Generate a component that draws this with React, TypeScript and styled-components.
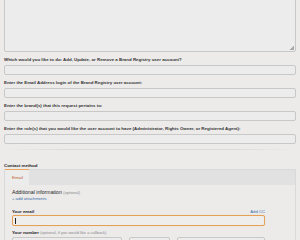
import React from "react";
import styled, { createGlobalStyle } from "styled-components";

const Global = createGlobalStyle`
     html, body {
          margin: 0;
          padding: 0;
          background: #ecebea;
          overflow: hidden;
     }
     body {
          font-family: "Liberation Sans", Arial, sans-serif;
          color: #2b2b2b;
     }
`;

const fields = [
     "Which would you like to do: Add, Update, or Remove a Brand Registry user account?",
     "Enter the Email Address login of the Brand Registry user account:",
     "Enter the brand(s) that this request pertains to:",
     "Enter the role(s) that you would like the user account to have (Administrator, Rights Owner, or Registered Agent):",
];

export default function App() {
     return (
          <>
               <Global />
               <S.Page>
                    <S.TextArea />
                    {fields.map((f) => (
                         <S.Field key={f}>
                              <S.Label>{f}</S.Label>
                              <S.Input />
                         </S.Field>
                    ))}
                    <S.Divider />
                    <S.SectionTitle>Contact method</S.SectionTitle>
                    <S.TabBar>
                         <S.Tab>Email</S.Tab>
                    </S.TabBar>
                    <S.Panel>
                         <S.InfoTitle>
                              Additional information <S.Muted>(optional)</S.Muted>
                         </S.InfoTitle>
                         <S.Link>+ add attachments</S.Link>
                         <S.LabelRow>
                              <S.SmallLabel>Your email</S.SmallLabel>
                              <S.Link>Add CC</S.Link>
                         </S.LabelRow>
                         <S.EmailInput>
                              <S.Caret />
                         </S.EmailInput>
                         <S.SmallLabel $gap={4}>
                              Your number <S.Muted>(optional, if you would like a callback)</S.Muted>
                         </S.SmallLabel>
                         <S.PhoneRow>
                              <S.PhoneBox $w={111} />
                              <S.PhoneBox $w={41} />
                              <S.PhoneBox $w={89} />
                         </S.PhoneRow>
                    </S.Panel>
               </S.Page>
          </>
     );
}

const S = {
     Page: styled.div`
          padding: 0 4px;
          display: flex;
          flex-direction: column;
     `,
     TextArea: styled.div`
          height: 60px;
          margin-top: -8px;
          box-sizing: border-box;
          border: 1px solid #c9c8c8;
          border-radius: 2px;
          background: #edecec;
          position: relative;
          &::after {
               content: "";
               position: absolute;
               right: 1px;
               bottom: 1px;
               width: 4px;
               height: 4px;
               background: linear-gradient(135deg, transparent 50%, #a9a9a9 50%);
          }
     `,
     Field: styled.div`
          display: flex;
          flex-direction: column;
          gap: 2px;
          margin-top: 5px;
     `,
     Label: styled.div`
          font-size: 4.4px;
          line-height: 6px;
          font-weight: 700;
          color: #333;
          white-space: nowrap;
     `,
     Input: styled.div`
          height: 10px;
          box-sizing: border-box;
          border: 1px solid #c9c8c8;
          border-radius: 2px;
          background: #edecec;
     `,
     Divider: styled.div`
          margin-top: 5px;
          height: 1px;
          background: linear-gradient(90deg, transparent, #dddcdc 20%, #dddcdc 80%, transparent);
     `,
     SectionTitle: styled.div`
          margin-top: 13px;
          font-size: 4.4px;
          line-height: 6px;
          font-weight: 700;
          color: #222;
     `,
     TabBar: styled.div`
          display: flex;
          height: 16px;
          background: #e2e1e1;
          border: 1px solid #dad9d9;
          border-bottom: none;
          box-sizing: border-box;
     `,
     Tab: styled.div`
          width: 24px;
          display: flex;
          align-items: center;
          padding-left: 7px;
          box-sizing: border-box;
          background: #edecec;
          border-top: 1px solid #e9a55e;
          margin-top: -1px;
          font-size: 4.4px;
          color: #c0622a;
     `,
     Panel: styled.div`
          padding: 4px 30px 10px 7px;
          border: 1px solid #dad9d9;
          border-top: none;
          display: flex;
          flex-direction: column;
          height: 80px;
     `,
     InfoTitle: styled.div`
          font-size: 5.2px;
          line-height: 7px;
          color: #222;
     `,
     Muted: styled.span`
          color: #8a8a8a;
          font-weight: 400;
          font-size: 4px;
     `,
     Link: styled.div`
          font-size: 4.2px;
          line-height: 6px;
          color: #3b6ea8;
     `,
     LabelRow: styled.div`
          display: flex;
          justify-content: space-between;
          align-items: flex-end;
          margin-top: 5px;
     `,
     SmallLabel: styled.div<{ $gap?: number }>`
          font-size: 4.4px;
          line-height: 6px;
          font-weight: 700;
          color: #222;
          margin-top: ${(p) => p.$gap ?? 2}px;
     `,
     EmailInput: styled.div`
          height: 11px;
          box-sizing: border-box;
          border: 1px solid #e4a158;
          border-radius: 2px;
          background: #efeeed;
          display: flex;
          align-items: center;
          padding-left: 2px;
          box-shadow: 0 0 1px #f0c690;
     `,
     Caret: styled.div`
          width: 1px;
          height: 6px;
          background: #222;
     `,
     PhoneRow: styled.div`
          display: flex;
          gap: 7px;
          margin-top: 1px;
     `,
     PhoneBox: styled.div<{ $w: number }>`
          width: ${(p) => p.$w}px;
          height: 10px;
          box-sizing: border-box;
          border: 1px solid #c9c8c8;
          border-radius: 2px;
          background: #edecec;
     `,
};
